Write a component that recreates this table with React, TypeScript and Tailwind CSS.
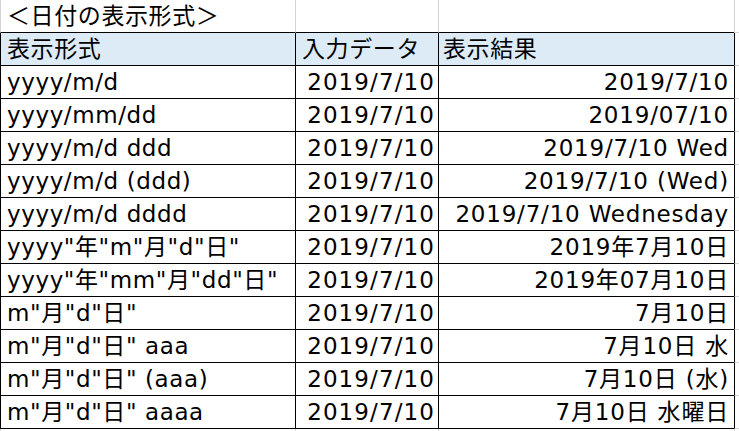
import React from "react";

const rows: [string, string, string][] = [
  ["yyyy/m/d", "2019/7/10", "2019/7/10"],
  ["yyyy/mm/dd", "2019/7/10", "2019/07/10"],
  ["yyyy/m/d ddd", "2019/7/10", "2019/7/10 Wed"],
  ["yyyy/m/d (ddd)", "2019/7/10", "2019/7/10 (Wed)"],
  ["yyyy/m/d dddd", "2019/7/10", "2019/7/10 Wednesday"],
  ['yyyy"年"m"月"d"日"', "2019/7/10", "2019年7月10日"],
  ['yyyy"年"mm"月"dd"日"', "2019/7/10", "2019年07月10日"],
  ['m"月"d"日"', "2019/7/10", "7月10日"],
  ['m"月"d"日" aaa', "2019/7/10", "7月10日 水"],
  ['m"月"d"日" (aaa)', "2019/7/10", "7月10日 (水)"],
  ['m"月"d"日" aaaa', "2019/7/10", "7月10日 水曜日"],
];

const font = {
  fontFamily: '"DejaVu Sans", "Noto Sans CJK JP", sans-serif',
};

export default function App() {
  return (
    <div
      className="w-[739px] h-[431px] overflow-hidden bg-white text-black text-[23px] leading-[32px] tracking-[0.6px] whitespace-pre"
      style={font}
    >
      {/* title row */}
      <div className="flex h-[33px]">
        <div className="w-[295px] border-l border-l-[#d4d4d4] border-b border-b-black pl-[6px]">
          ＜日付の表示形式＞
        </div>
        <div className="w-[143px] border-l border-l-[#d4d4d4] border-b border-b-black" />
        <div className="w-[296px] border-l border-l-[#d4d4d4] border-b border-b-black" />
        <div className="flex-1 border-l border-l-[#d4d4d4] border-b border-b-[#d4d4d4]" />
      </div>
      {/* header row */}
      <div className="flex h-[33px]">
        <div className="w-[295px] border-l border-black border-b bg-[#ddebf7] pl-[6px]">
          表示形式
        </div>
        <div className="w-[143px] border-l border-black border-b bg-[#ddebf7] pl-[6px]">
          入力データ
        </div>
        <div className="w-[296px] border-l border-black border-b bg-[#ddebf7] pl-[4px]">
          表示結果
        </div>
        <div className="flex-1 border-l border-l-black border-b border-b-[#d4d4d4]" />
      </div>
      {rows.map((r, i) => (
        <div key={i} className="flex h-[33px]">
          <div className="w-[295px] border-l border-black border-b pl-[6px] overflow-hidden">
            {r[0]}
          </div>
          <div className="w-[143px] border-l border-black border-b pr-[3px] text-right overflow-hidden tracking-[1.1px]">
            {r[1]}
          </div>
          <div className="w-[296px] border-l border-black border-b pr-[5px] text-right overflow-hidden tracking-[0.8px]">
            {r[2]}
          </div>
          <div className="flex-1 border-l border-l-black border-b border-b-[#d4d4d4]" />
        </div>
      ))}
      <div className="flex h-[10px]">
        <div className="w-[295px] border-l border-l-[#d4d4d4]" />
        <div className="w-[143px] border-l border-l-[#d4d4d4]" />
        <div className="w-[296px] border-l border-l-[#d4d4d4]" />
        <div className="flex-1 border-l border-l-[#d4d4d4]" />
      </div>
    </div>
  );
}
